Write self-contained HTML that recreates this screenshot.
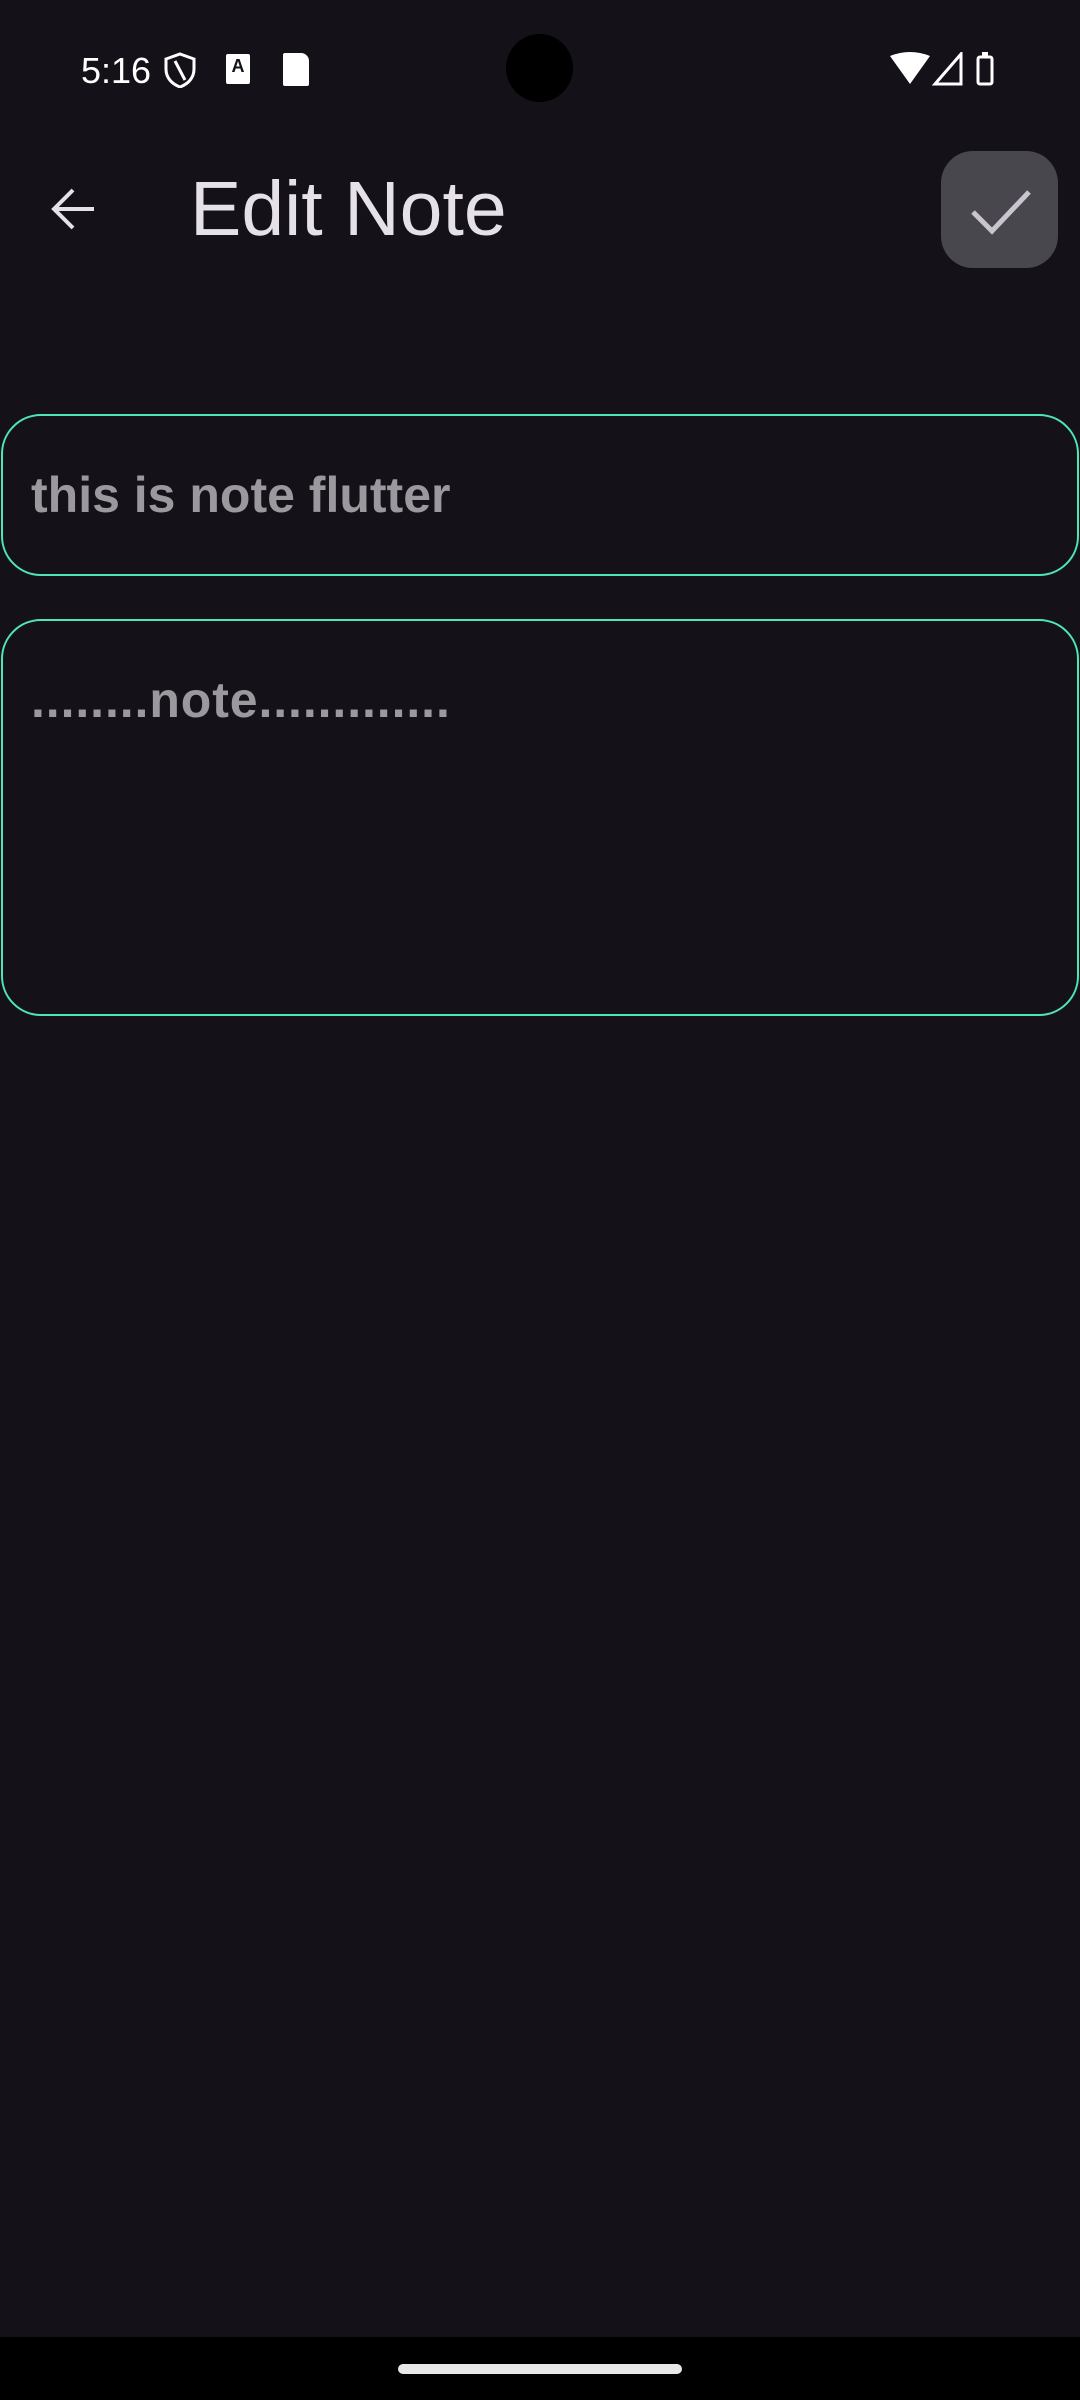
<!DOCTYPE html>
<html><head><meta charset="utf-8"><style>
*{margin:0;padding:0;box-sizing:border-box}
html,body{width:1080px;height:2400px;background:#141218;overflow:hidden;font-family:"Liberation Sans",sans-serif;position:relative}
.abs{position:absolute}
.field{position:absolute;left:1px;width:1078px;border:2.5px solid #4fe6b5;border-radius:40px}
.ft{position:absolute;left:31px;font-size:50px;font-weight:bold;color:#9b999e;white-space:nowrap;line-height:1}
</style></head><body>
<div class="abs" style="left:81px;top:50px;font-size:36px;color:#fff;">5:16</div>
<svg class="abs" style="left:163px;top:52px" width="34" height="36" viewBox="0 0 34 36"><path d="M17 2 L31 7 V17 C31 26 25 32 17 35 C9 32 3 26 3 17 V7 Z" fill="none" stroke="#fff" stroke-width="3"/><path d="M12 9 L22 28" stroke="#fff" stroke-width="3"/></svg>
<div class="abs" style="left:226px;top:54px;width:24px;height:30px;background:#fff;border-radius:2px;color:#141218;font-size:18px;font-weight:bold;text-align:center;line-height:24px">A</div>
<div class="abs" style="left:283px;top:53px;width:26px;height:33px;background:#fff;border-radius:2px 8px 2px 2px"></div>
<div class="abs" style="left:506px;top:34px;width:67px;height:68px;background:#000;border-radius:50%"></div>
<svg class="abs" style="left:890px;top:52px" width="112" height="34" viewBox="0 0 112 34"><path d="M0 4 Q20 -4 40 4 L20 32 Z" fill="#fff"/><path d="M45 32 L71 32 L71 2 Z" fill="none" stroke="#fff" stroke-width="3"/><rect x="88" y="5" width="14" height="27" rx="2" fill="none" stroke="#fff" stroke-width="3"/><rect x="92" y="0" width="6" height="5" fill="#fff"/></svg>
<svg class="abs" style="left:50px;top:186px" width="46" height="46" viewBox="0 0 46 46"><path d="M44 23 H5 M23 4 L4 23 L23 42" fill="none" stroke="#e6e0e9" stroke-width="4"/></svg>
<div class="abs" style="left:190px;top:171px;font-size:77px;color:#e6e0e9;line-height:1;white-space:nowrap">Edit Note</div>
<div class="abs" style="left:941px;top:151px;width:117px;height:117px;background:#49474e;border-radius:32px"></div>
<svg class="abs" style="left:970px;top:188px" width="62" height="48" viewBox="0 0 62 48"><path d="M3 24 L22 43 L59 4" fill="none" stroke="#cac4d0" stroke-width="5"/></svg>
<div class="field" style="top:414px;height:162px"></div>
<div class="ft" style="top:470px">this is note flutter</div>
<div class="field" style="top:619px;height:397px"></div>
<div class="ft" style="top:675px;letter-spacing:0.9px">........note.............</div>
<div class="abs" style="left:0;top:2337px;width:1080px;height:63px;background:#000"></div>
<div class="abs" style="left:398px;top:2364px;width:284px;height:10px;background:#e8e8e8;border-radius:5px"></div>
</body></html>
